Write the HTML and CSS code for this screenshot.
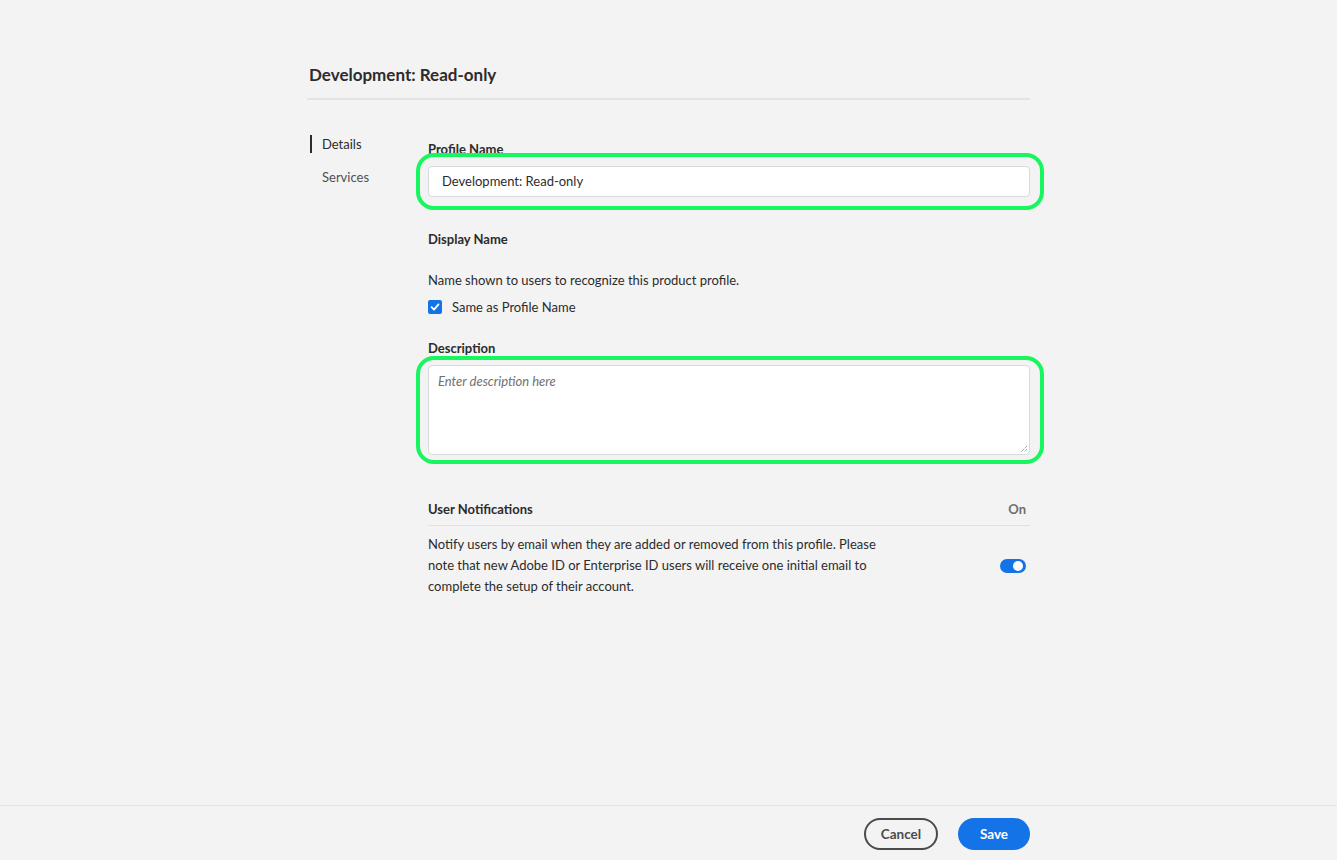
FILE: index.html
```html
<!DOCTYPE html>
<html>
<head>
<meta charset="utf-8">
<link rel="stylesheet" href="styles.css">
</head>
<body>
<div class="page">
  <main class="main">
    <h1 class="title">Development: Read-only</h1>
    <div class="body">
      <nav class="nav">
        <div class="nav-item active">Details</div>
        <div class="nav-item">Services</div>
      </nav>
      <section class="form">
        <div class="label first">Profile Name</div>
        <div class="hl hl-input">
          <div class="input">Development: Read-only</div>
        </div>
        <div class="label dn">Display Name</div>
        <div class="help">Name shown to users to recognize this product profile.</div>
        <div class="check-row">
          <span class="checkbox"><svg width="10" height="10" viewBox="0 0 10 10"><path d="M1.6 5.2 L4 7.6 L8.5 2.4" fill="none" stroke="#fff" stroke-width="1.8" stroke-linecap="round" stroke-linejoin="round"/></svg></span>
          <span>Same as Profile Name</span>
        </div>
        <div class="label desc">Description</div>
        <div class="hl hl-area">
          <div class="textarea"><span class="ph">Enter description here</span>
            <svg class="grip" width="8" height="8" viewBox="0 0 8 8"><path d="M7 1 L1 7 M7 4 L4 7" stroke="#777" stroke-width="1" stroke-dasharray="1 1"/></svg>
          </div>
        </div>
        <div class="notif-head">
          <span class="label">User Notifications</span>
          <span class="on">On</span>
        </div>
        <div class="notif-row">
          <p class="notif-text">Notify users by email when they are added or removed from this profile. Please note that new Adobe ID or Enterprise ID users will receive one initial email to complete the setup of their account.</p>
          <span class="toggle"><span class="knob"></span></span>
        </div>
      </section>
    </div>
  </main>
  <footer class="footer">
    <div class="actions">
      <button class="btn cancel">Cancel</button>
      <button class="btn save">Save</button>
    </div>
  </footer>
</div>
</body>
</html>
```

FILE: styles.css
```css
* { box-sizing: border-box; }
html, body { margin: 0; padding: 0; }
body {
  background: #f3f3f3;
  font-family: Lato, "Open Sans", sans-serif;
  color: #2c2c2c;
  font-size: 13px;
}
.page {
  height: 860px;
  display: flex;
  flex-direction: column;
}
.main {
  width: 723px;
  margin: 0 auto;
  flex: 1;
}
.title {
  margin: 0;
  padding: 65px 2px 0;
  font-size: 17px;
  font-weight: 700;
  height: 100px;
  border-bottom: 2px solid #e4e4e4;
  line-height: 20px;
  color: #2c2c2c;
}
.body {
  display: flex;
  padding-top: 35px;
}
.nav {
  width: 121px;
  padding-left: 3px;
  display: flex;
  flex-direction: column;
  gap: 15px;
}
.nav-item {
  padding-left: 10px;
  line-height: 18px;
  font-size: 13px;
  color: #505050;
  border-left: 2px solid transparent;
}
.nav-item.active {
  border-left-color: #2c2c2c;
  color: #2c2c2c;
}
.form {
  flex: 1;
  display: flex;
  flex-direction: column;
}
.label {
  font-weight: 700;
  font-size: 13px;
  line-height: 16px;
  color: #2c2c2c;
}
.label.first { margin-top: 6px; }
.hl {
  position: relative;
  margin-top: 9px;
}
.hl::after {
  content: "";
  position: absolute;
  left: -12px;
  right: -14px;
  top: -13px;
  bottom: -13px;
  border: 4px solid #17f55f;
  border-radius: 18px;
  pointer-events: none;
}
.input {
  height: 31px;
  background: #fff;
  border: 1px solid #dadada;
  border-radius: 4px;
  padding: 0 13px;
  line-height: 29px;
  font-size: 13px;
  color: #2c2c2c;
}
.dn { margin-top: 34px; }
.help {
  margin-top: 24px;
  line-height: 18px;
}
.check-row {
  display: flex;
  align-items: center;
  gap: 10px;
  margin-top: 9px;
  line-height: 18px;
}
.checkbox {
  width: 14px;
  height: 14px;
  border-radius: 2px;
  background: #1473e6;
  display: flex;
  align-items: center;
  justify-content: center;
}
.desc { margin-top: 24px; }
.hl-area::after { top: -9px; bottom: -9px; }
.textarea {
  position: relative;
  height: 90px;
  background: #fff;
  border: 1px solid #dadada;
  border-radius: 4px;
  padding: 7px 9px;
}
.ph {
  font-style: italic;
  color: #707070;
  font-size: 13px;
}
.grip {
  position: absolute;
  right: 1px;
  bottom: 1px;
}
.notif-head {
  margin-top: 46px;
  display: flex;
  justify-content: space-between;
  align-items: center;
  padding-bottom: 8px;
  border-bottom: 1px solid #e1e1e1;
}
.on {
  font-weight: 700;
  font-size: 13px;
  color: #6e6e6e;
  padding-right: 4px;
}
.notif-row {
  display: flex;
  justify-content: space-between;
  align-items: center;
  padding-top: 8px;
}
.notif-text {
  margin: 0;
  width: 456px;
  line-height: 21px;
}
.toggle {
  width: 26px;
  height: 14px;
  border-radius: 7px;
  background: #1473e6;
  position: relative;
  margin-right: 4px;
}
.knob {
  position: absolute;
  right: 3px;
  top: 2px;
  width: 10px;
  height: 10px;
  border-radius: 50%;
  background: #fff;
}
.footer {
  height: 55px;
  border-top: 1px solid #e4e4e4;
  display: flex;
  justify-content: center;
}
.actions {
  width: 723px;
  display: flex;
  justify-content: flex-end;
  gap: 20px;
  padding-top: 12px;
}
.btn {
  height: 32px;
  border-radius: 16px;
  font-family: inherit;
  font-weight: 700;
  font-size: 13.5px;
  padding: 0 14px;
  cursor: pointer;
}
.cancel {
  width: 74px;
  background: transparent;
  border: 2px solid #4b4b4b;
  color: #4b4b4b;
}
.save {
  width: 72px;
  background: #1473e6;
  border: none;
  color: #fff;
}
```
